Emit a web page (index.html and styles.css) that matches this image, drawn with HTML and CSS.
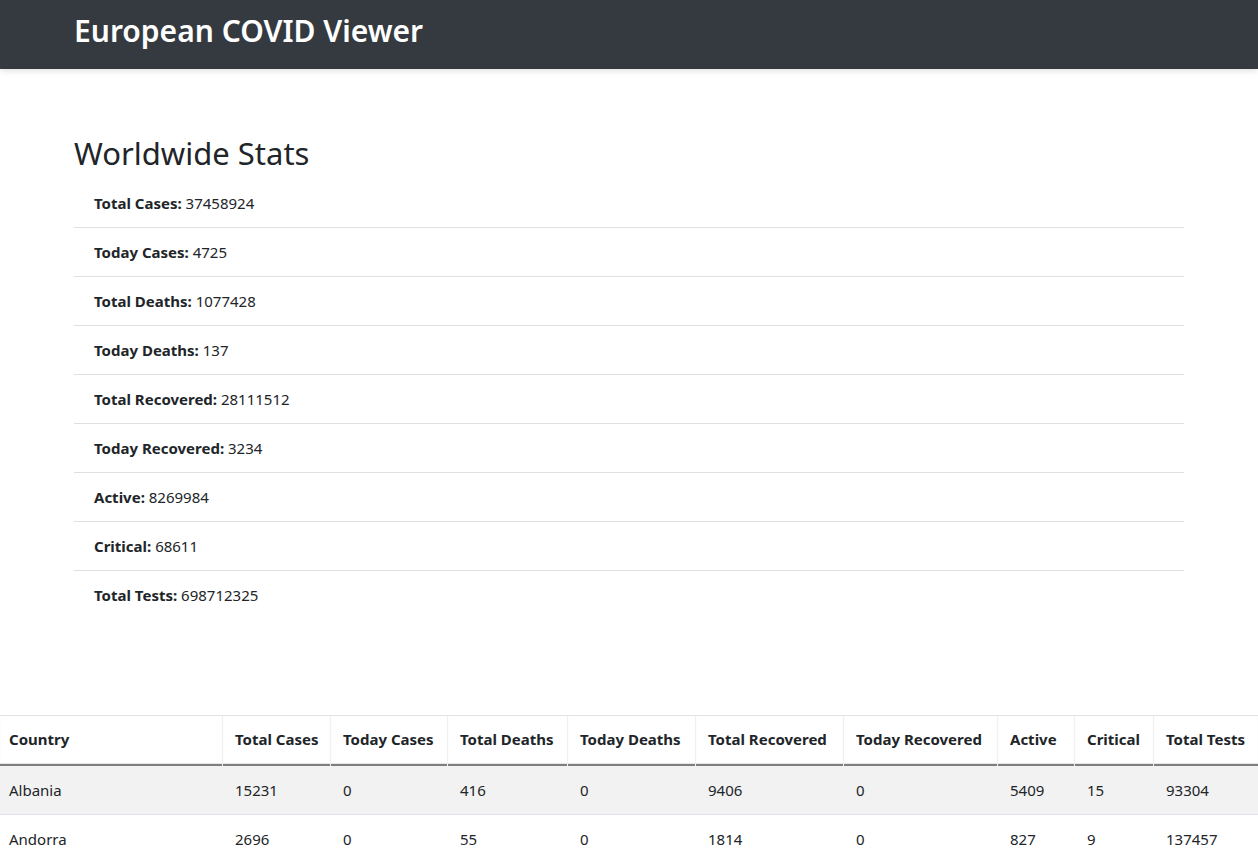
FILE: index.html
```html
<!DOCTYPE html>
<html lang="en">
<head>
<meta charset="utf-8">
<title>European COVID Viewer</title>
<link rel="stylesheet" href="styles.css">
</head>
<body>
<nav class="navbar">
  <div class="container">
    <span class="brand">European COVID Viewer</span>
  </div>
</nav>
<main class="container stats">
  <h2 class="stats-title">Worldwide Stats</h2>
  <ul class="stat-list">
    <li><b>Total Cases:</b> 37458924</li>
    <li><b>Today Cases:</b> 4725</li>
    <li><b>Total Deaths:</b> 1077428</li>
    <li><b>Today Deaths:</b> 137</li>
    <li><b>Total Recovered:</b> 28111512</li>
    <li><b>Today Recovered:</b> 3234</li>
    <li><b>Active:</b> 8269984</li>
    <li><b>Critical:</b> 68611</li>
    <li><b>Total Tests:</b> 698712325</li>
  </ul>
</main>
<table class="data-table">
  <colgroup>
    <col class="c1"><col class="c2"><col class="c3"><col class="c4"><col class="c5">
    <col class="c6"><col class="c7"><col class="c8"><col class="c9"><col class="c10">
  </colgroup>
  <thead>
    <tr>
      <th>Country</th><th>Total Cases</th><th>Today Cases</th><th>Total Deaths</th><th>Today Deaths</th>
      <th>Total Recovered</th><th>Today Recovered</th><th>Active</th><th>Critical</th><th>Total Tests</th>
    </tr>
  </thead>
  <tbody>
    <tr class="odd">
      <td>Albania</td><td>15231</td><td>0</td><td>416</td><td>0</td><td>9406</td><td>0</td><td>5409</td><td>15</td><td>93304</td>
    </tr>
    <tr>
      <td>Andorra</td><td>2696</td><td>0</td><td>55</td><td>0</td><td>1814</td><td>0</td><td>827</td><td>9</td><td>137457</td>
    </tr>
  </tbody>
</table>
</body>
</html>
```
FILE: styles.css
```css
* { box-sizing: border-box; }
html, body { margin: 0; padding: 0; }
body {
  font-family: "Noto Sans", "Open Sans", sans-serif;
  font-size: 15px;
  line-height: 24px;
  color: #212529;
  background: #fff;
  overflow: hidden;
}
.container {
  width: 1110px;
  margin: 0 auto;
}
.navbar {
  background: #343a40;
  height: 69px;
  box-shadow: 0 2px 6px rgba(0,0,0,0.12);
  position: relative;
  z-index: 1;
}
.navbar .container {
  display: flex;
  align-items: center;
  height: 69px;
}
.brand {
  color: #fff;
  font-size: 30px;
  font-weight: 600;
  line-height: 36px;
  margin-top: -7px;
}
.stats {
  padding-top: 63px;
}
.stats-title {
  font-size: 31px;
  font-weight: 400;
  line-height: 38px;
  margin: 0 0 9px 0;
  position: relative;
  top: 2px;
}
.stat-list {
  list-style: none;
  margin: 0;
  padding: 0;
}
.stat-list li {
  padding: 12px 20px;
  border-bottom: 1px solid #dfdfdf;
}
.stat-list li:last-child { border-bottom: none; }
.stat-list b { font-weight: 700; }

.data-table {
  margin-top: 96px;
  width: 1258px;
  border-collapse: separate;
  border-spacing: 0;
  table-layout: fixed;
  border-top: 1px solid #e3e3e3;
}
.c1 { width: 223px; }
.c2 { width: 108px; }
.c3 { width: 117px; }
.c4 { width: 120px; }
.c5 { width: 128px; }
.c6 { width: 148px; }
.c7 { width: 154px; }
.c8 { width: 77px; }
.c9 { width: 79px; }
.c10 { width: 104px; }
.data-table th {
  text-align: left;
  font-weight: 700;
  padding: 11px 12px 15px 12px;
  height: 50px;
  border-right: 1px solid #f0f0f0;
  box-shadow: inset 0 -2px 0 rgba(0,0,0,0.45), inset 0 -3px 1px rgba(0,0,0,0.1);
  white-space: nowrap;
}
.data-table th:last-child { border-right: none; }
.data-table td {
  padding: 12px 12px;
  height: 49px;
  border-bottom: 1px solid #e2e2ea;
  white-space: nowrap;
}
.data-table th:first-child,
.data-table td:first-child { padding-left: 9px; }
.data-table tr.odd td { background: #f2f2f2; }
```
